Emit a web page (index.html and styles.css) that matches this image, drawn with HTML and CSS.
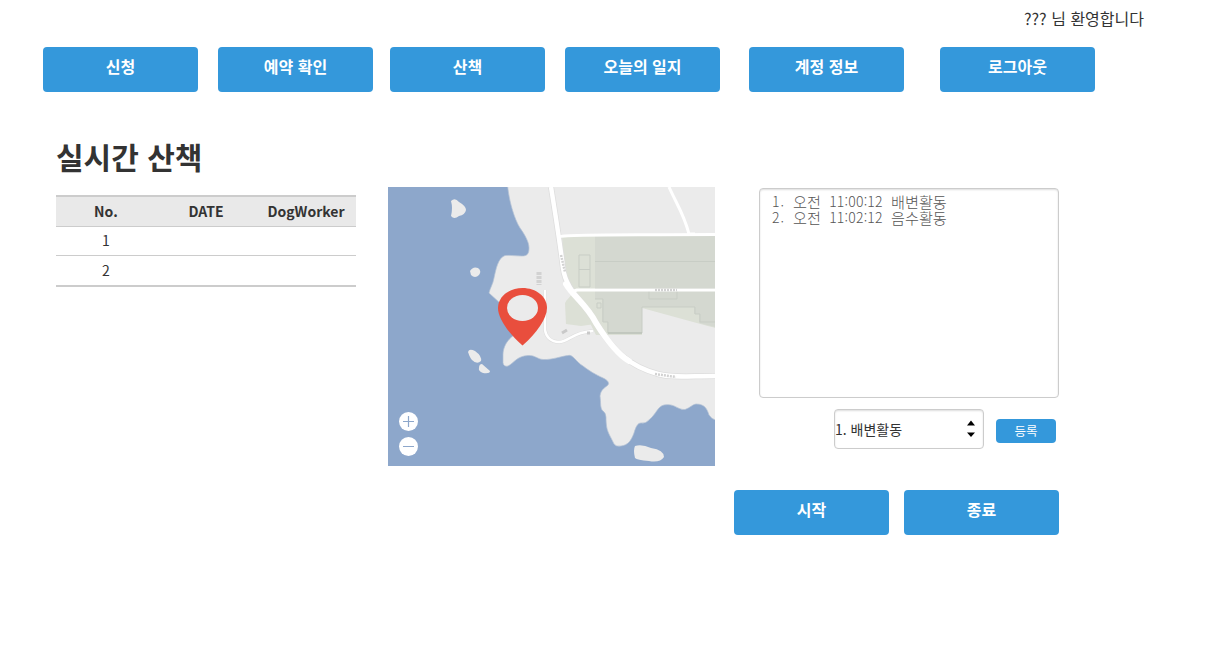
FILE: index.html
```html
<!DOCTYPE html>
<html lang="ko">
<head>
<meta charset="utf-8">
<title>실시간 산책</title>
<link rel="stylesheet" href="styles.css">
</head>
<body>
<header class="welcome">??? 님 환영합니다</header>
<nav class="nav">
  <a class="btn">신청</a>
  <a class="btn nav-reserve">예약 확인</a>
  <a class="btn nav-walk">산책</a>
  <a class="btn nav-diary">오늘의 일지</a>
  <a class="btn nav-account">계정 정보</a>
  <a class="btn nav-logout">로그아웃</a>
</nav>
<h1 class="title">실시간 산책</h1>
<main class="content">
  <table class="walks">
    <thead><tr><th>No.</th><th>DATE</th><th>DogWorker</th></tr></thead>
    <tbody>
      <tr><td>1</td><td></td><td></td></tr>
      <tr class="last"><td>2</td><td></td><td></td></tr>
    </tbody>
  </table>
  <svg class="map" viewBox="0 0 327 279" width="327" height="279">
    <rect width="327" height="279" fill="#ebebeb"/>
    <!-- park blocks -->
    <path d="M174 49H327V141L317 139L254 122V148H208L202 136H182Q177 128 178 114L184 108L176 88Z" fill="#dce0d6"/>
    <path d="M207 49H327V140L311 136V127H306V120H254V146H219V135H214V112H207Z" fill="#d4d8d0"/>
    <path d="M254 121L327 141V192H254Z" fill="#ebebeb"/>
    <path d="M184 107L207 137L193 139L178 137L177 116Z" fill="#dce0d6"/>
    <g fill="none" stroke="#c8cdc5" stroke-width="1">
      <path d="M207 74.5H327M191 68H202V100H191ZM191 82.5H202M207 101.5H327M207 112H215V135H220V146H254V120H307V127H312V135H327M261 102V112H289V102M209 116H213V121H209Z"/>
    </g>
    <path d="M220 146H254" stroke="#bdc3ba" stroke-width="1.5"/>
    <!-- water and coast -->
    <path class="water" d="M-2 -2H119.500C121 14 126 31 132 41C137 48 141 55 141 61C141 67 139 69 134 69C127 69 122 68 117 68.500C110 71 108 82 106 91C105 97 102 101 101 106L113 117L126 148C119 153 115 160 115 168V176Q116 180 120 179C126 176 129 169 140 168.500C147 168 149 172 155 172.500C164 173 174 169 180 168.500C185 167 188 175 195 179C204 186 211 189 217 192Q222 195 220 198C215 202 213 203 212 209C213 216 212 219 214 223Q218 226 218 230C218 245 221 246 226 257Q228 260 233 259C240 258 243 254 246 246C248 239 250 236 253 236Q258 237 262 232C268 227 270 219 276 218C287 216 289 223 297 222.500C302 221 305 217 308 217C317 217 319 222 321 228Q323 232 330 234V282H-2Z"/>
    <g fill="#ebebeb">
      <path d="M63 14Q67 10 71 15Q78 19 78 23Q77 28 71 29Q66 33 63 29Q65 21 63 14Z"/>
      <path d="M82 84Q85 79 90 81Q94 84 91 88Q87 92 83 88Z"/>
      <path d="M80 165Q81 161 87 164Q94 169 93 174Q89 178 84 173Q82 171 80 165Z"/>
      <path d="M91 181Q91 177 94 177L102 184Q102 187 95 186Q90 184 91 181Z"/>
      <path d="M247 259Q254 257 263 261Q276 263 276 270Q272 276 261 274Q249 273 247 271Q245 263 247 259Z"/>
    </g>
    <!-- roads -->
    <g fill="none" stroke="#ddd" stroke-linejoin="round">
      <path stroke-width="3.500" d="M157 103V143C158 150 163 155 171 155C181 155 184 145 205 144"/>
      <path stroke-width="6" d="M163 0C168 31 172 57 175 81C178 105 198 116 208 136C225 164 241 179 270 187C284 191 300 189 327 189"/>
    </g>
    <g fill="none" stroke="#fff" stroke-linejoin="round">
      <path stroke-width="2.400" d="M157 103V143C158 150 163 155 171 155C181 155 184 145 205 144"/>
      <path stroke-width="3" d="M172 49.500C180 47 225 48 327 47.500M281 0C288 16 296 27 301 47L307 47M183 105L189 103H327"/>
      <path stroke-width="4.500" d="M163 0C168 31 172 57 175 81C178 105 198 116 208 136C225 164 241 179 270 187C284 191 300 189 327 189"/>
      <path stroke-width="6" stroke-linecap="round" d="M178 97C185 109 199 118 208 136C218 152 229 167 241 174"/>
    </g>
    <!-- faint road label marks -->
    <g fill="none" stroke="#d2d2d2" stroke-width="2.500">
      <path stroke-dasharray="2 1" d="M173 68L177 85M267 103H289M267 187L288 190"/>
      <path stroke-width="5" stroke-dasharray="3 1" d="M151 85V98"/>
      <path stroke="#c9c9c9" stroke-width="3" d="M174 146L179 143M199 146H202"/>
    </g>
    <!-- marker -->
    <path fill="#e94e3d" d="M134.500 101C121 101 110 109.500 110 121C110 131 120 146 134.500 158.500C149 146 159 131 159 121C159 109.500 148 101 134.500 101Z"/>
    <ellipse cx="134.500" cy="121" rx="15.500" ry="13" fill="#ebebeb"/>
    <g fill="#fff"><circle cx="20.500" cy="234.500" r="9.500"/><circle cx="20.500" cy="259.500" r="9.500"/></g>
    <path d="M15 234.500H26M20.500 229V240M15 259.500H26" stroke="#8da7cb" stroke-width="1.200"/>
  </svg>
  <section class="panel">
    <div class="log"><div><span class="num">1.</span>오전<span class="time">11:00:12</span>배변활동</div><div><span class="num">2.</span>오전<span class="time">11:02:12</span>음수활동</div></div>
    <div class="entry">
      <div class="select">1. 배변활동
        <svg class="arrows" width="8" height="18" viewBox="0 0 8 18"><path d="M0 5.500L4 .5L8 5.500ZM0 12.500L4 17L8 12.500Z"/></svg>
      </div>
      <button class="add">등록</button>
    </div>
    <div class="actions"><a class="btn">시작</a><a class="btn">종료</a></div>
  </section>
</main>
</body>
</html>
```
FILE: styles.css
```css
* { box-sizing: border-box; }
body {
  margin: 0;
  background: #fff;
  color: #333;
  font-family: "Noto Sans CJK KR", sans-serif;
  font-size: 16px;
}
.welcome {
  height: 47px;
  padding: 6px 68px 0 0;
  text-align: right;
  line-height: 24px;
}
.nav { display: flex; padding-left: 43px; }
.btn {
  display: block;
  width: 155px;
  height: 45px;
  border-radius: 4px;
  background: #3498db;
  color: #fff;
  font-weight: 700;
  line-height: 38px;
  text-align: center;
}
.nav-reserve, .nav-diary { margin-left: 20px; }
.nav-walk { margin-left: 17px; }
.nav-account { margin-left: 29px; }
.nav-logout { margin-left: 36px; }
.title {
  margin: 42px 0 0 56px;
  height: 53px;
  font-size: 30px;
  font-weight: 700;
  line-height: 44px;
}
.content { display: flex; align-items: flex-start; padding-left: 56px; }
.walks {
  width: 300px;
  margin-top: 8px;
  border-collapse: separate;
  border-spacing: 0;
  table-layout: fixed;
  font-size: 14px;
  line-height: 20px;
  text-align: center;
}
.walks th, .walks td { padding: 0 0 2px; border-bottom: 1px solid #ccc; }
.walks th { height: 32px; background: #e9e9e9; border-top: 2px solid #ccc; }
.walks td { height: 29px; }
.walks .last td { height: 31px; border-bottom-width: 2px; }
.map { display: block; flex: none; margin-left: 32px; }
.water { fill: #8da7cb; stroke: #b3c1d4; stroke-width: .7; }
.panel { width: 325px; margin: 1px 0 0 19px; }
.log {
  width: 300px;
  height: 210px;
  margin-left: 25px;
  padding: 4px 12px;
  border: 1px solid #ccc;
  border-radius: 4px;
  box-shadow: inset 0 1px 2px #ddd;
  color: #555;
  font-size: 15.2px;
  font-weight: 300;
  line-height: 16px;
}
.log div { display: flex; height: 16px; }
.num { width: 21px; font-size: 14px; letter-spacing: 1px; }
.time { width: 70px; font-size: 14px; letter-spacing: .2px; text-align: center; }
.entry { display: flex; margin: 11px 0 0 100px; }
.select {
  display: flex;
  align-items: center;
  justify-content: space-between;
  width: 150px;
  height: 40px;
  padding: 0 8px 0 0;
  border: 1px solid #ccc;
  border-radius: 4px;
  box-shadow: inset 0 1px 2px #ddd;
  font-size: 14px;
}
.arrows { fill: #000; }
.add {
  width: 60px;
  height: 24px;
  margin: 10px 0 0 12px;
  padding: 0;
  border: 0;
  border-radius: 4px;
  background: #3498db;
  color: #fff;
  font: 12.5px/24px "Noto Sans CJK KR", sans-serif;
}
.actions { display: flex; gap: 15px; margin-top: 41px; }
```
